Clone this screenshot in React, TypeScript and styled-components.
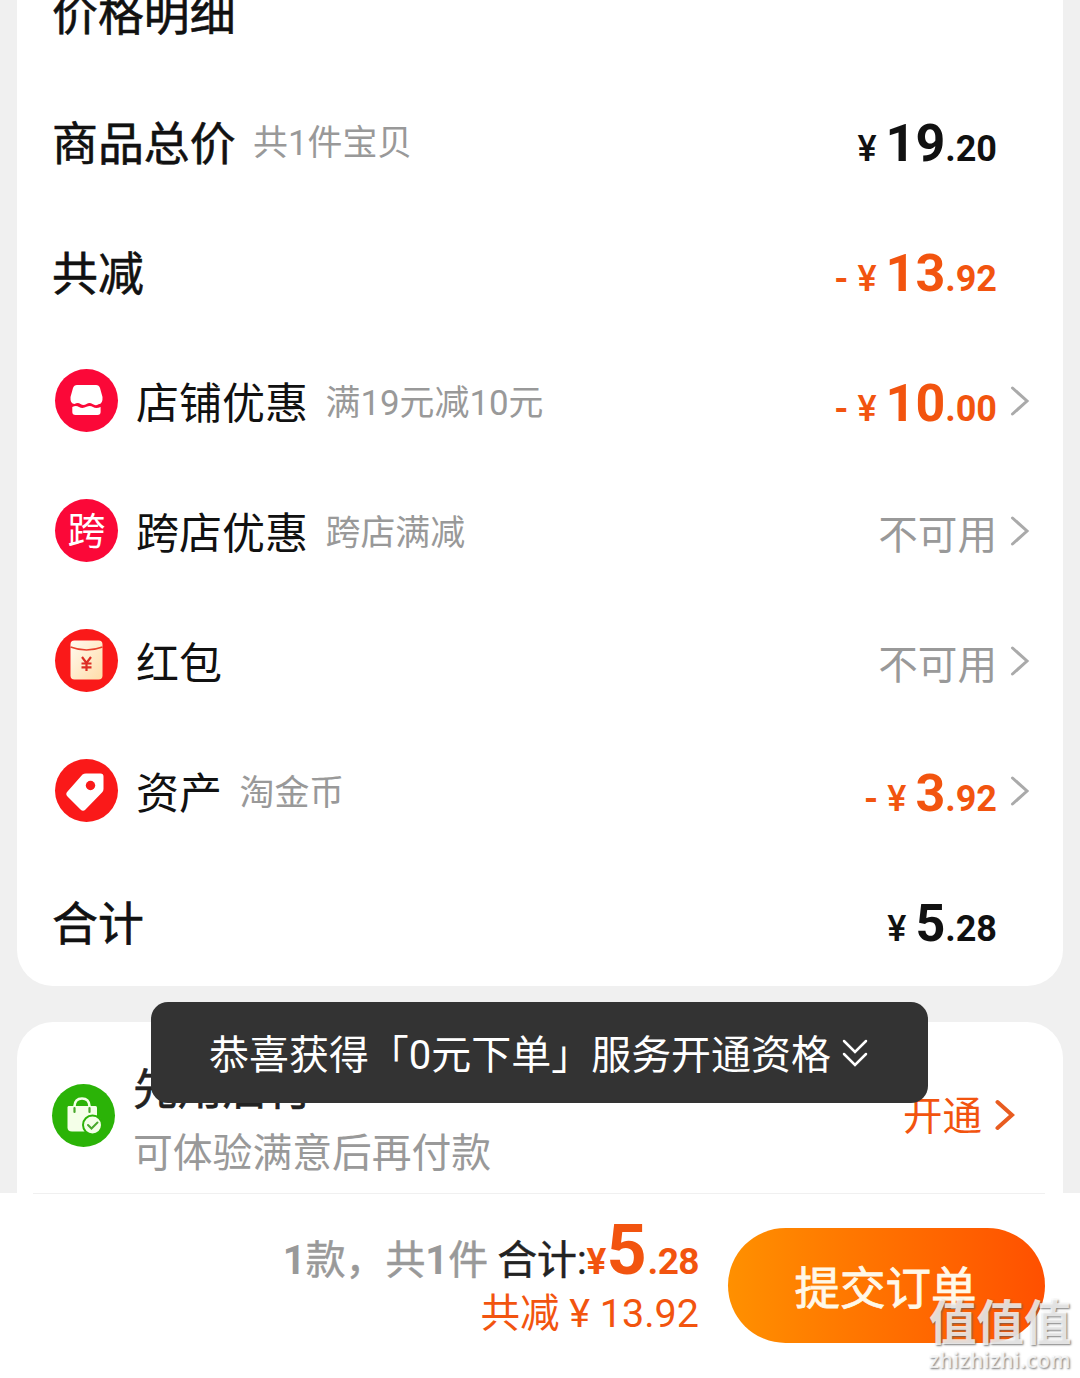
import React from "react";
import styled, { createGlobalStyle } from "styled-components";

const ORANGE = "#f2540f";

const GlobalStyle = createGlobalStyle`
  * { box-sizing: border-box; }
  body {
    margin: 0;
    background: #f0f0f0;
    font-family: Roboto, "Noto Sans CJK SC", sans-serif;
    color: #111;
  }
`;

const Page = styled.div`
  position: relative;
  width: 1080px;
  height: 1378px;
  overflow: hidden;
  display: flex;
  flex-direction: column;
`;

const Content = styled.main`
  height: 1193px;
  padding: 0 17px;
  overflow: hidden;
  display: flex;
  flex-direction: column;
  gap: 36px;
`;

const DetailCard = styled.section`
  flex: none;
  height: 986px;
  background: #fff;
  border-radius: 0 0 36px 36px;
  overflow: hidden;
  display: flex;
  flex-direction: column;
  justify-content: flex-end;
`;

const Row = styled.div`
  flex: none;
  height: 130px;
  padding: 0 33px 0 35px;
  display: flex;
  align-items: center;
  &:last-child { margin-bottom: -2px; }
`;

const Title = styled.h2`
  margin: 2px 0 0;
  font-size: 45.9px;
  line-height: 60px;
  font-weight: 400;
  -webkit-text-stroke: 0.6px currentColor;
  white-space: nowrap;
`;

const Label = styled.span`
  margin: 1px 0 0 18px;
  font-size: 43px;
  line-height: 60px;
  white-space: nowrap;
`;

const Note = styled.span`
  margin: 2px 0 0 17.5px;
  font-size: 34.9px;
  line-height: 50px;
  color: #999;
  white-space: nowrap;
`;

const Badge = styled.span<{ $color: string }>`
  flex: none;
  width: 63px;
  height: 63px;
  margin: -6px 0 0 3px;
  border-radius: 50%;
  background: ${(p) => p.$color};
  color: #fff;
  display: flex;
  align-items: center;
  justify-content: center;
  font-size: 38px;
  line-height: 63px;
`;

const BadgeText = styled.span`
  margin-top: 2px;
`;

const Value = styled.div`
  margin-left: auto;
  display: flex;
  align-items: center;
`;

const PriceBox = styled.span<{ $accent?: boolean }>`
  margin-top: 6px;
  display: flex;
  align-items: baseline;
  line-height: 60px;
  font-weight: 700;
  white-space: nowrap;
  color: ${(p) => (p.$accent ? ORANGE : "#111")};
`;

const Minus = styled.span`
  margin-right: 9px;
  font-size: 36px;
`;

const Yen = styled.span`
  margin-right: 9px;
  font-size: 36px;
  font-weight: 500;
`;

const Whole = styled.span`
  font-size: 52px;
`;

const Cents = styled.span`
  font-size: 36px;
`;

const Unavailable = styled.span`
  margin-top: 6px;
  font-size: 39.6px;
  line-height: 56px;
  color: #999;
`;

const ArrowSlot = styled.span`
  width: 33px;
  height: 34px;
  margin-top: -4px;
  padding-left: 13px;
`;

const Chevron = ({ color, width = 3 }: { color: string; width?: number }) => (
  <svg width="20" height="34" viewBox="0 0 20 34" fill="none" style={{ display: "block" }}>
    <path d="M2.5 4 L17 17 L2.5 30" stroke={color} strokeWidth={width} strokeLinecap="round" />
  </svg>
);

const StoreIcon = () => (
  <svg width="63" height="63" viewBox="0 0 63 63">
    <path
      d="M22 16 H41 Q44 16 45 19 L47.500 28 Q48 35 43.500 35.200 Q40.500 37.200 37.500 35 Q34.500 33 31.500 35 Q28.500 37.200 25.500 35 Q23 33 19.500 35 Q15 35 15.500 28 L18 19 Q19 16 22 16 Z"
      fill="#fff"
    />
    <path
      d="M17.300 38 Q21 36 24 38 Q27.500 40 31.500 37.800 Q35 36 38 38 Q41 40 45.600 38 V43 Q45.600 46 42.500 46 H20.500 Q17.300 46 17.300 43 Z"
      fill="#fff"
    />
  </svg>
);

const PacketIcon = () => (
  <svg width="63" height="63" viewBox="0 0 63 63">
    <defs>
      <linearGradient id="packet" x1="0" y1="0" x2="1" y2="1">
        <stop offset="0" stopColor="#fffaf0" />
        <stop offset="1" stopColor="#ffdca8" />
      </linearGradient>
    </defs>
    <rect x="15.500" y="11.500" width="32" height="39" rx="4" fill="url(#packet)" />
    <path d="M15.500 18 Q31.500 24 47.500 18" stroke="#e8402c" strokeWidth="1.600" fill="none" />
    <path d="M27 28 L31.500 34 L36 28 M31.500 34 V42 M26.500 34.500 H36.500 M26.500 38.300 H36.500" stroke="#dc2d24" strokeWidth="2.200" fill="none" />
  </svg>
);

const TagIcon = () => (
  <svg width="63" height="63" viewBox="0 0 63 63">
    <path
      d="M27.500 15.500 Q29 14.500 31 14.500 H45.500 Q48.500 14.500 48.500 17.500 V30 Q48.500 32 47 33.500 L30.500 50.500 Q28 53 25.500 50.500 L12.500 37.500 Q10 35 12.500 32.500 Z"
      fill="#fff"
    />
    <circle cx="35.500" cy="26.500" r="4.700" fill="#fa1919" />
  </svg>
);

const BagIcon = () => (
  <svg width="63" height="63" viewBox="0 0 63 63">
    <path d="M22.500 27 V22 Q23 14.500 30 14.500 Q37 14.500 37.500 22 V27" stroke="#f4ffe8" strokeWidth="2.600" fill="none" />
    <path d="M16.500 22 H43.500 Q45 22 45 23.500 V47.500 H20 Q15.500 47.500 15.500 43.500 V23.500 Q15.500 22 16.500 22 Z" fill="#f4ffe8" />
    <path d="M22.500 24 V28 M37.500 24 V28" stroke="#48a82c" strokeWidth="2.200" strokeLinecap="round" />
    <circle cx="40.500" cy="41" r="9.500" fill="#f4ffe8" stroke="#2bb307" strokeWidth="2" />
    <path d="M36 41 L39.500 44.500 L45.500 38.500" stroke="#48a82c" strokeWidth="2" fill="none" strokeLinecap="round" />
  </svg>
);

const Price = ({ whole, cents, minus }: { whole: string; cents: string; minus?: boolean }) => (
  <PriceBox $accent={minus}>
    {minus && <Minus>-</Minus>}
    <Yen>¥</Yen>
    <Whole>{whole}</Whole>
    <Cents>.{cents}</Cents>
  </PriceBox>
);

const Arrow = ({ show }: { show?: boolean }) => (
  <ArrowSlot>{show && <Chevron color="#aaa" />}</ArrowSlot>
);

const ServiceCard = styled.section`
  flex: none;
  height: 180px;
  padding: 36px 48px 0 35px;
  background: #fff;
  border-radius: 36px 36px 0 0;
  display: flex;
  align-items: flex-start;
`;

const ServiceBadge = styled(Badge)`
  margin: 26px 0 0 0;
`;

const ServiceText = styled.div`
  margin-left: 18px;
  display: flex;
  flex-direction: column;
`;

const ServiceName = styled.span`
  font-size: 44.8px;
  line-height: 64px;
  color: #222;
  -webkit-text-stroke: 0.6px currentColor;
`;

const ServiceHint = styled.span`
  margin-top: -1px;
  font-size: 39.8px;
  line-height: 66px;
  color: #999;
`;

const OpenLink = styled.div`
  margin: 30px 0 0 auto;
  display: flex;
  align-items: center;
  gap: 13px;
  font-size: 39.5px;
  line-height: 58px;
  color: ${ORANGE};
  svg { margin-top: -5px; }
`;

const Footer = styled.footer`
  height: 185px;
  padding: 35px 35px 0 0;
  background: #fff;
  position: relative;
  display: flex;
  justify-content: flex-end;
  align-items: flex-start;
  gap: 29px;
`;

const Divider = styled.div`
  position: absolute;
  left: 33px;
  right: 35px;
  top: 0;
  height: 1px;
  background: #f0f0f0;
`;

const Summary = styled.div`
  display: flex;
  flex-direction: column;
  align-items: flex-end;
`;

const SummaryLine = styled.div`
  height: 54px;
  margin-top: -8px;
  display: flex;
  align-items: baseline;
  line-height: 60px;
  font-size: 39.9px;
  white-space: nowrap;
`;

const Count = styled.span`
  color: #999;
  -webkit-text-stroke: 0.5px currentColor;
  b { font-weight: 700; -webkit-text-stroke: 0; }
`;

const TotalLabel = styled.span`
  margin-left: 9px;
  color: #222;
  -webkit-text-stroke: 0.5px currentColor;
`;

const TotalPrice = styled.span`
  display: flex;
  align-items: baseline;
  color: ${ORANGE};
  font-weight: 700;
`;

const TotalYen = styled.span`
  font-size: 37px;
`;

const TotalWhole = styled.span`
  font-size: 70px;
  line-height: 60px;
`;

const TotalCents = styled.span`
  margin-left: 1px;
  font-size: 37px;
  letter-spacing: -0.6px;
`;

const SavedLine = styled.div`
  margin-top: 13px;
  font-size: 39.5px;
  line-height: 54px;
  color: ${ORANGE};
  white-space: nowrap;
`;

const Submit = styled.button`
  flex: none;
  width: 317px;
  height: 115px;
  padding: 8px 2px 0 0;
  border: 0;
  border-radius: 58px;
  background: linear-gradient(90deg, #ff9000, #ff5000);
  color: #fff8e8;
  font: 400 45.5px/60px Roboto, "Noto Sans CJK SC", sans-serif;
  -webkit-text-stroke: 0.8px currentColor;
`;

const Toast = styled.div`
  position: absolute;
  left: 151px;
  top: 1002px;
  width: 777px;
  height: 101px;
  padding-left: 58px;
  border-radius: 17px;
  background: #333;
  color: #fff;
  display: flex;
  align-items: center;
  gap: 11px;
  font-size: 39.97px;
  line-height: 60px;
  white-space: nowrap;
`;

const ToastText = styled.span`
  margin-top: 6px;
`;

const Watermark = styled.div`
  position: absolute;
  left: 929px;
  top: 1294px;
  display: flex;
  flex-direction: column;
  color: rgba(255, 255, 255, 0.78);
  text-shadow: 1px 1px 2px rgba(90, 90, 90, 0.8);
  white-space: nowrap;
`;

const WatermarkName = styled.span`
  font: 700 47.500px/52px "Noto Sans CJK SC", sans-serif;
`;

const WatermarkSite = styled.span`
  margin-top: 1px;
  font: 600 21px/26px "Open Sans", sans-serif;
  letter-spacing: 0.4px;
`;

export default function App() {
  return (
    <Page lang="zh-CN">
      <GlobalStyle />
      <Content>
        <DetailCard>
          <Row>
            <Title>价格明细</Title>
          </Row>
          <Row>
            <Title>商品总价</Title>
            <Note>共1件宝贝</Note>
            <Value>
              <Price whole="19" cents="20" />
              <Arrow />
            </Value>
          </Row>
          <Row>
            <Title>共减</Title>
            <Value>
              <Price minus whole="13" cents="92" />
              <Arrow />
            </Value>
          </Row>
          <Row>
            <Badge $color="#fb0838"><StoreIcon /></Badge>
            <Label>店铺优惠</Label>
            <Note>满19元减10元</Note>
            <Value>
              <Price minus whole="10" cents="00" />
              <Arrow show />
            </Value>
          </Row>
          <Row>
            <Badge $color="#fb0838"><BadgeText>跨</BadgeText></Badge>
            <Label>跨店优惠</Label>
            <Note>跨店满减</Note>
            <Value>
              <Unavailable>不可用</Unavailable>
              <Arrow show />
            </Value>
          </Row>
          <Row>
            <Badge $color="#fa1919"><PacketIcon /></Badge>
            <Label>红包</Label>
            <Value>
              <Unavailable>不可用</Unavailable>
              <Arrow show />
            </Value>
          </Row>
          <Row>
            <Badge $color="#fa1919"><TagIcon /></Badge>
            <Label>资产</Label>
            <Note>淘金币</Note>
            <Value>
              <Price minus whole="3" cents="92" />
              <Arrow show />
            </Value>
          </Row>
          <Row>
            <Title>合计</Title>
            <Value>
              <Price whole="5" cents="28" />
              <Arrow />
            </Value>
          </Row>
        </DetailCard>
        <ServiceCard>
          <ServiceBadge $color="#2bb307"><BagIcon /></ServiceBadge>
          <ServiceText>
            <ServiceName>先用后付</ServiceName>
            <ServiceHint>可体验满意后再付款</ServiceHint>
          </ServiceText>
          <OpenLink>
            开通
            <Chevron color="#e85c20" width={4} />
          </OpenLink>
        </ServiceCard>
      </Content>
      <Footer>
        <Divider />
        <Summary>
          <SummaryLine>
            <Count><b>1</b>款，共<b>1</b>件</Count>
            <TotalLabel>合计:</TotalLabel>
            <TotalPrice>
              <TotalYen>¥</TotalYen>
              <TotalWhole>5</TotalWhole>
              <TotalCents>.28</TotalCents>
            </TotalPrice>
          </SummaryLine>
          <SavedLine>共减 ¥ 13.92</SavedLine>
        </Summary>
        <Submit>提交订单</Submit>
      </Footer>
      <Toast>
        <ToastText>恭喜获得「0元下单」服务开通资格</ToastText>
        <svg width="26" height="32" viewBox="0 0 26 32" fill="none">
          <path d="M2 4 L13 15 L24 4 M2 17 L13 28 L24 17" stroke="#fff" strokeWidth="2.500" strokeLinecap="round" />
        </svg>
      </Toast>
      <Watermark>
        <WatermarkName>值值值</WatermarkName>
        <WatermarkSite>zhizhizhi.com</WatermarkSite>
      </Watermark>
    </Page>
  );
}
